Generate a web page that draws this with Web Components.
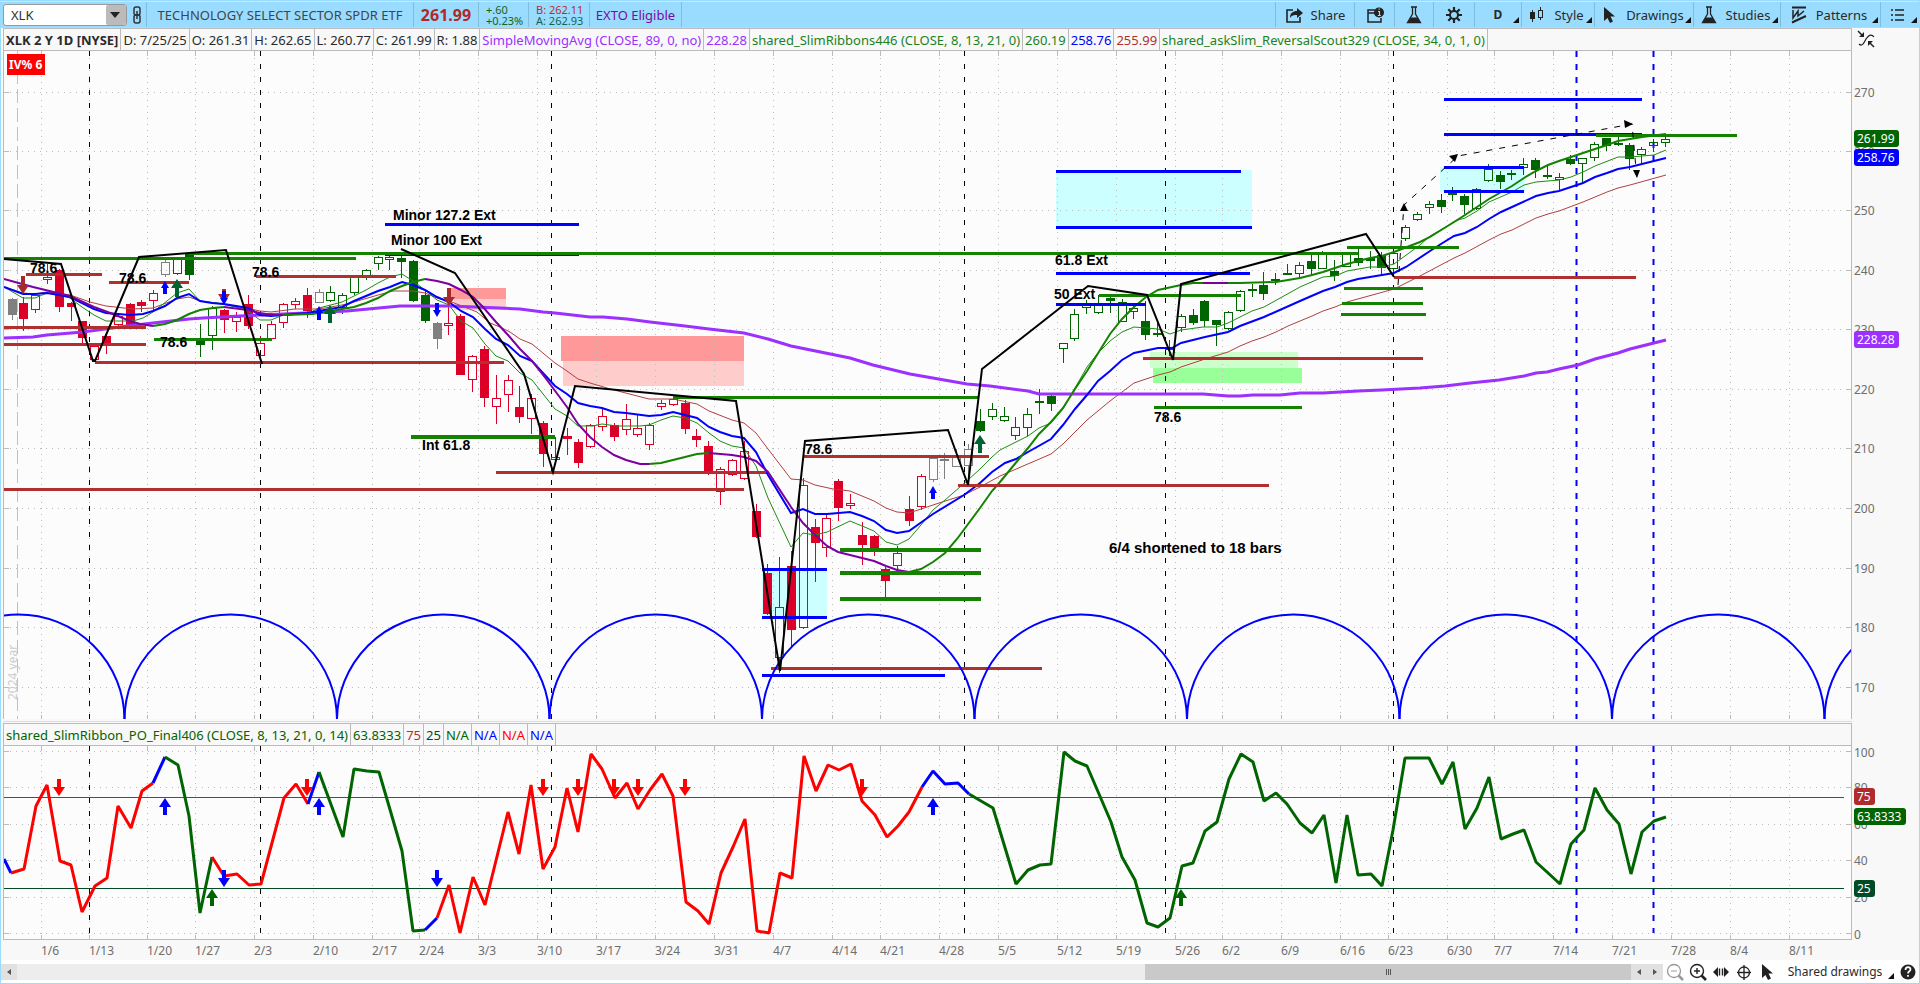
<!DOCTYPE html>
<html lang="en">
<head>
<meta charset="utf-8">
<title>XLK 2 Y 1D</title>
<style>
  html { background: #f8f8f8; }
  body { margin: 0; font-family: "Noto Sans", "Open Sans", sans-serif; font-size: 12px; color: #2a2a2a; }
</style>
</head>
<body>
<chart-window></chart-window>

<script>
const define = (name, html, setup) => customElements.define(name, class extends HTMLElement {
  connectedCallback() {
    if (this.shadowRoot) return;
    const root = this.attachShadow({ mode: "open" });
    const t = document.createElement("template");
    t.innerHTML = typeof html === "function" ? html(this) : html;
    root.append(t.content.cloneNode(true));
    if (setup) setup(this, root);
  }
});

/* ---------- icons ---------- */
const ICONS = {
  share: '<path d="M8 4H2v12h13v-5" fill="none" stroke="#222" stroke-width="1.6"/><path d="M5 12c0-5 3-7 7-7V2l6 5-6 5V9c-3 0-5 0-7 3z" fill="#222"/>',
  info: '<path d="M9 4H2v12h13v-4M2 7h8" fill="none" stroke="#222" stroke-width="1.5"/><circle cx="13" cy="6.500" r="5" fill="#222"/><path d="M12 5.500h1.500V9M11.800 9.500h3M12.600 3.200h1.200" stroke="#9adcff" stroke-width="1.200" fill="none"/>',
  flask: '<path d="M6 1h6M7.500 1v7L2.500 16.500h13L10.500 8V1" fill="none" stroke="#222" stroke-width="1.3"/><path d="M5.600 11.500h6.800l3 5.500H2.600z" fill="#222"/>',
  gear: '<g stroke="#222" stroke-width="2.200"><path d="M9 1v4M9 13v4M1 9h4M13 9h4M3.300 3.300l3 3M11.700 11.700l3 3M3.300 14.700l3-3M11.700 6.300l3-3"/></g><circle cx="9" cy="9" r="4" fill="none" stroke="#222" stroke-width="2"/>',
  candles: '<path d="M4.500 4v12M12.500 1v13" stroke="#222" stroke-width="1"/><rect x="2" y="6" width="5" height="7" fill="#222"/><rect x="10.500" y="4.500" width="4" height="7" fill="#9adcff" stroke="#222"/>',
  cursor: '<path d="M4 1v14l3.500-3 2.500 5 3-1.500-2.500-5H15z" fill="#222"/>',
  patterns: '<path d="M2 1.500h14M2 16.500L16 10" stroke="#222" stroke-width="2"/><path d="M3 4v8l5-7v5l6-5" fill="none" stroke="#222" stroke-width="1.500"/>',
  list: '<path d="M2 4h2M6 4h9M2 9h2M6 9h9M2 14h2M6 14h9" stroke="#222" stroke-width="1.600"/>',
  link: '<rect x="6" y="1" width="6" height="8" rx="2" fill="none" stroke="#333" stroke-width="1.500"/><rect x="6" y="9" width="6" height="8" rx="2" fill="none" stroke="#333" stroke-width="1.500"/><path d="M9 5v8" stroke="#333" stroke-width="1.500"/>',
  zoomOut: '<circle cx="8" cy="8" r="6.500" fill="none" stroke="#999" stroke-width="1.300"/><path d="M5 8h6" stroke="#999"/><path d="M12.500 12.500L17 17" stroke="#999" stroke-width="2.500"/>',
  zoomIn: '<circle cx="8" cy="8" r="6.500" fill="none" stroke="#222" stroke-width="1.400"/><path d="M5 8h6M8 5v6" stroke="#222" stroke-width="1.400"/><path d="M12.500 12.500L17 17" stroke="#222" stroke-width="2.600"/>',
  spread: '<path d="M1 9l5-5v10zM17 9l-5-5v10z" fill="#222"/><path d="M7.500 5.500v7M10.500 5.500v7" stroke="#222" stroke-width="1.400"/>',
  cross: '<circle cx="9" cy="9.500" r="5.500" fill="none" stroke="#222" stroke-width="1.300"/><path d="M9 2v15M2 9.500h14" stroke="#222" stroke-width="1.300"/>',
  collapse: '<path d="M1 1l5 5" stroke="#222" stroke-width="1.500"/><path d="M7 2v5H2z" fill="#222"/><path d="M2 14c3 3 5-1 7-5 2-3 5-6 8-2" fill="none" stroke="#222" stroke-width="1.200"/><path d="M17 17l-5-5" stroke="#222" stroke-width="1.500"/><path d="M11 16v-5h5z" fill="#222"/>',
  help: '<circle cx="9" cy="9" r="7.500" fill="#222"/><path d="M6.500 7c0-4 5-3.500 5-.5 0 2-2.500 1.500-2.500 4M9 12v1.800" fill="none" stroke="#fff" stroke-width="1.700"/>'
};

/* icon-glyph: one 18px line icon picked by name */
define("icon-glyph", el => `<style>:host{display:block;width:18px;height:18px;flex:none}svg{display:block}</style>
  <svg width="18" height="18" viewBox="0 0 18 18">${ICONS[el.getAttribute("name")]}</svg>`);

/* tool-button: icon, label and an optional menu corner */
define("tool-button", el => `<style>
  :host{display:block;height:100%;box-sizing:border-box;width:var(--w,auto);font-size:13px}
  button{all:unset;box-sizing:border-box;position:relative;display:flex;align-items:center;justify-content:center;gap:8px;width:100%;height:100%;font-size:inherit;white-space:nowrap;color:#2a2a2a}
  :host([menu]) button{padding-right:4px}
  :host([menu]) button::after{content:"";position:absolute;right:2px;bottom:4px;border:3px solid transparent;border-right-color:#111;border-bottom-color:#111}
  :host([strong]) button{font-weight:bold;padding-right:0;font-size:12px}
  </style><button type="button" aria-label="${el.getAttribute("label") || el.textContent.trim()}">${el.hasAttribute("icon") ? `<icon-glyph name="${el.getAttribute("icon")}"></icon-glyph>` : ""}<slot></slot></button>`);

define("main-toolbar", `<style>
  :host{display:flex;align-items:stretch;height:27px;box-sizing:border-box;background:#9adcff;border-top:1px solid #c4e9fb;border-bottom:1px solid #b0dcf0;padding-left:3px;margin-left:-1px}
  .combo{position:relative;width:124px;align-self:center;height:22px}
  select{appearance:none;box-sizing:border-box;width:100%;height:22px;border:1px solid #999;border-radius:3px;background:#fff;font:13px "Noto Sans",sans-serif;color:#333;padding:0 0 0 7px;display:block}
  .combo::after{content:"";position:absolute;right:1px;top:1px;width:20px;height:20px;border-radius:2px;background:#bbb}
  .combo::before{content:"";position:absolute;z-index:1;right:7px;top:8px;border:5px solid transparent;border-top:6px solid #222;border-bottom:0}
  .cell{display:flex;align-items:center;border-left:1px solid #80bcdc;white-space:nowrap}
  .name{font-size:13px;width:266px;justify-content:center;color:#444}
  .last{font-size:16px;font-weight:bold;color:#b02828;width:64px;justify-content:center}
  .two{flex-direction:column;align-items:flex-start;justify-content:center;font-size:11px;line-height:11px;box-sizing:border-box}
  .chg{color:#146414;width:50px;padding-left:7px} .ba{width:61px;padding-left:7px;color:#14644a} .ba b{font-weight:normal;color:#b03030}
  .exto{color:#7a0aa0;font-size:13px;width:91px;justify-content:center}
  .fill{flex:1}
  tool-button{border-left:1px solid #80bcdc}
  tool-button.link{--w:19px;border:0}
</style>
<label class="combo"><select aria-label="Symbol"><option>XLK</option></select></label>
<tool-button class="link" icon="link" label="Link symbol"></tool-button>
<div class="cell name">TECHNOLOGY SELECT SECTOR SPDR ETF</div>
<div class="cell last">261.99</div>
<div class="cell two chg"><span>+.60</span><span>+0.23%</span></div>
<div class="cell two ba"><b>B: 262.11</b><span>A: 262.93</span></div>
<div class="cell exto">EXTO Eligible</div>
<div class="cell fill"></div>
<tool-button icon="share" style="--w:79px">Share</tool-button>
<tool-button icon="info" style="--w:40px" label="Info"></tool-button>
<tool-button icon="flask" style="--w:39px" label="Lab"></tool-button>
<tool-button icon="gear" style="--w:41px" label="Settings"></tool-button>
<tool-button menu strong style="--w:47px">D</tool-button>
<tool-button menu icon="candles" style="--w:73px">Style</tool-button>
<tool-button menu icon="cursor" style="--w:99px">Drawings</tool-button>
<tool-button menu icon="flask" style="--w:87px">Studies</tool-button>
<tool-button menu icon="patterns" style="--w:100px">Patterns</tool-button>
<tool-button menu icon="list" style="--w:39px" label="Panels"></tool-button>`);

/* study-bar: the row of values above a pane; cells are slotted */
define("study-bar", `<style>
  :host{display:flex;height:23px;box-sizing:border-box;border:1px solid #bbb;background:#f8f8f8;overflow:hidden}
  ::slotted(span){display:flex;align-items:center;padding:0 2px;border-right:1px solid #bbb;white-space:nowrap;font-size:13px;line-height:18px}
</style><slot></slot>`);

/* ---------- drawing helpers ---------- */
const DATES = [["1/6",41],["1/13",89],["1/20",147],["1/27",195],["2/3",254],["2/10",313],["2/17",372],["2/24",419],["3/3",478],["3/10",537],["3/17",596],["3/24",655],["3/31",714],["4/7",773],["4/14",832],["4/21",880],["4/28",939],["5/5",998],["5/12",1057],["5/19",1116],["5/26",1175],["6/2",1222],["6/9",1281],["6/16",1340],["6/23",1388],["6/30",1447],["7/7",1494],["7/14",1553],["7/21",1612],["7/28",1671],["8/4",1730],["8/11",1789]];
const seg = (x1, y1, x2, y2, c, w = 1, dash = "") => `<path d="M${x1} ${y1}L${x2} ${y2}" stroke="${c}" stroke-width="${w}" fill="none"${dash ? ` stroke-dasharray="${dash}"` : ""}/>`;
const poly = (pts, c, w, extra = "") => `<polyline points="${pts}" fill="none" stroke="${c}" stroke-width="${w}" ${extra}/>`;
const rect = (x1, y1, x2, y2, c) => `<rect x="${x1}" y="${y1}" width="${x2 - x1}" height="${y2 - y1}" fill="${c}"/>`;
const up = (x, y, c, h = 18, r = 6) => `<path fill="${c}" d="M${x} ${y}l${r} ${r + 3}h-${r - 2}v${h - r - 3}h-4v-${h - r - 3}h-${r - 2}z"/>`;
const down = (x, y, c, h = 18, r = 6) => `<path fill="${c}" d="M${x} ${y}l${r} -${r + 3}h-${r - 2}v-${h - r - 3}h-4v${h - r - 3}h-${r - 2}z"/>`;
const grid = (top, bottom, ys) => {
  let s = "";
  for (const [, x] of DATES) s += seg(x + .5, top + 1, x + .5, bottom, "#bcbcbc", 1, "1 5") + seg(x + .5, top, x + .5, top + 5, "#bbb") + seg(x + .5, bottom - 4, x + .5, bottom, "#bbb");
  for (const y of ys) s += seg(4, y + .5, 1851, y + .5, "#bcbcbc", 1, "1 5") + seg(4, y + .5, 9, y + .5, "#bbb") + seg(1846, y + .5, 1851, y + .5, "#bbb");
  return s;
};
const verticals = (top, bottom) => [89, 260, 551, 964, 1165, 1393].map(x => seg(x + .5, top, x + .5, bottom, "#000", 1, "5 8")).join("")
  + [1576, 1653].map(x => seg(x + .5, top, x + .5, bottom, "#00f", 2, "6 7")).join("");

/* ---------- price pane data: type, wick top, wick bottom, body top, body bottom ----------
   r/g/y filled red, green, grey; R/G/Y hollow */
const CANDLES = `y 298 320 299 315,r 297 331 303 319,R 294 313 295 310,R 264 284 277 280,r 269 312 270 307,r 302 321 303 307,r 321 344 321 338,R 345 362 346 360,r 335 354 336 344,R 314 328 316 325,r 303 326 304 325,r 300 312 302 306,R 290 310 293 301,Y 260 277 262 275,G 257 275 259 274,g 254 280 254 275,g 324 357 340 345,G 306 350 308 336,r 309 333 310 320,R 312 332 317 322,r 295 329 304 326,R 336 359 343 356,R 321 339 324 339,R 303 328 304 323,R 298 309 301 305,r 288 318 295 311,Y 289 303 292 303,G 286 302 292 301,G 293 314 295 308,G 276 295 277 293,G 269 280 270 276,G 256 270 257 264,G 252 270 257 260,g 255 278 258 262,g 260 302 261 301,g 290 323 295 321,y 322 349 323 339,R 307 335 323 326,r 314 375 316 375,R 355 392 356 380,r 346 407 349 398,R 375 424 398 407,R 375 412 380 395,r 386 423 407 417,R 394 434 398 419,r 421 467 423 454,R 437 459 457 459,r 428 455 436 439,r 439 468 442 463,R 424 448 425 447,R 408 431 416 427,r 423 441 425 437,R 404 435 419 430,R 415 437 428 435,R 423 450 425 445,R 400 410 403 407,R 398 406 399 405,r 400 434 403 429,r 429 447 436 440,r 441 475 446 472,R 467 505 469 492,R 459 476 460 475,R 441 480 451 479,r 504 538 511 537,r 564 615 573 614,R 557 673 607 658,r 551 648 566 630,R 478 629 485 628,r 519 582 527 543,R 513 557 518 548,r 479 521 481 508,R 494 509 503 506,r 522 565 535 545,r 535 556 536 550,r 567 597 569 581,R 546 570 553 566,r 496 526 509 521,R 474 510 476 507,Y 458 482 458 480,y 453 479 459 461,Y 449 467 455 467,Y 444 477 449 466,g 409 432 421 431,G 403 420 409 417,G 407 422 416 421,G 417 440 427 436,G 408 436 414 428,g 389 414 401 403,g 395 411 396 404,G 343 363 343 349,G 309 341 314 339,G 300 314 305 308,G 295 314 303 313,g 297 313 298 301,G 299 322 302 322,G 306 319 308 312,g 301 340 321 335,g 321 337 333 335,g 340 356 348 349,G 314 332 316 328,g 309 325 315 323,g 300 327 301 321,g 320 346 320 325,G 311 330 312 329,G 290 312 291 311,g 284 297 289 291,g 272 300 285 294,g 273 285 279 281,g 264 275 273 275,G 262 278 265 274,g 255 275 261 269,G 251 269 254 269,g 260 281 271 276,G 253 267 254 267,g 248 266 258 263,g 251 269 258 261,g 252 274 255 268,G 251 272 253 269,G 225 241 227 239,G 212 221 214 220,G 201 214 204 208,g 194 213 200 207,g 187 201 193 194,g 194 214 196 205,G 188 210 189 209,G 164 182 169 181,g 171 189 175 182,g 170 180 173 175,G 158 175 164 168,g 158 178 160 170,g 165 179 175 177,G 173 191 177 180,g 155 165 159 164,G 158 183 158 164,G 142 161 144 158,g 138 151 138 146,g 137 146 143 145,g 143 170 145 159,G 147 164 149 155,G 139 152 142 146,G 136 147 139 143`;
const candleMarks = () => CANDLES.split(",").map((row, k) => {
  const [type, wt, wb, bt, bb] = row.split(" ").map((v, i) => i ? +v : v);
  const x = Math.floor(12 + 11.81 * k);
  const c = { r: "#dc0028", g: "#006400", y: "#808080" }[type.toLowerCase()];
  const h = Math.max(bb - bt, 2);
  let s = `<path d="M${x + .5} ${wt}V${bt}M${x + .5} ${bt + h}V${wb}" stroke="${c}"/>`;
  return s + (type === type.toLowerCase()
    ? rect(x - 4, bt, x + 5, bt + h, c)
    : `<rect x="${x - 3.5}" y="${bt + .5}" width="8" height="${Math.max(h - 1, 2)}" fill="none" stroke="${c}"/>`);
}).join("");

const MA89 = "4,338 33,337 47,335 83,332 127,326 153,323 189,319 203,318 240,316 283,314 347,311 400,306 450,306 500,308 520,309 543,312 555,313 590,317 603,317 627,319 650,322 685,326 709,329 744,333 768,339 791,346 850,358 873,365 910,374 967,384 990,386 1028,391 1039,394 1203,394 1228,396 1240,396 1253,395 1280,395 1300,393 1323,393 1358,391 1382,390 1420,388 1445,386 1470,383 1499,380 1524,376 1536,373 1547,372 1559,369 1578,365 1595,359 1618,353 1630,349 1666,340";
const EMA13 = "4,287 23,294 35,294 47,293 59,295 70,297 94,309 106,313 130,315 143,314 153,311 165,306 177,298 189,294 200,301 212,303 224,304 236,306 248,308 260,315 271,316 283,315 307,313 319,311 330,309 342,307 354,301 366,296 378,291 390,287 402,282 413,285 425,290 437,297 449,302 461,311 473,317 485,329 496,339 508,345 520,356 532,361 555,386 567,394 578,403 590,406 602,408 614,412 626,413 649,416 661,415 673,412 697,418 709,427 720,432 732,436 744,438 756,452 768,475 791,513 803,509 815,514 827,514 850,512 862,516 874,521 886,530 897,533 909,531 933,514 964,495 980,483 992,472 1005,463 1016,459 1028,452 1051,439 1063,425 1075,409 1087,395 1098,381 1110,371 1122,360 1134,353 1158,348 1172,348 1181,343 1205,337 1228,332 1240,326 1264,317 1300,301 1323,291 1335,287 1347,282 1358,279 1382,275 1394,273 1406,267 1430,251 1441,244 1454,236 1465,233 1477,227 1489,219 1501,212 1512,207 1536,196 1548,193 1559,191 1583,183 1595,177 1607,173 1618,169 1630,167 1666,158";
const EMA8 = "4,287 23,298 35,298 47,293 59,295 70,298 82,307 94,315 106,321 133,321 143,318 153,312 177,293 189,289 200,301 217,303 236,307 248,311 260,320 271,320 283,315 307,314 319,308 342,302 354,296 366,290 378,283 390,277 402,274 413,281 425,290 437,300 449,305 461,321 473,328 485,344 496,356 508,361 520,373 532,380 555,409 567,416 578,426 593,426 602,424 617,426 640,426 649,425 661,420 673,416 685,418 697,423 709,433 720,441 732,446 744,448 756,466 768,498 791,547 803,533 815,535 827,532 850,521 862,526 874,531 886,542 897,545 909,539 921,525 933,510 945,500 968,480 980,469 992,457 1000,450 1016,442 1028,436 1039,428 1051,423 1063,409 1087,367 1098,353 1110,341 1122,332 1134,327 1158,329 1170,334 1181,330 1203,327 1217,327 1228,323 1240,317 1252,311 1264,307 1300,287 1323,277 1335,276 1347,271 1370,267 1382,267 1394,264 1420,245 1430,236 1458,220 1465,218 1477,211 1489,202 1512,192 1524,185 1536,182 1559,180 1571,177 1583,172 1595,166 1618,157 1630,157 1654,155 1666,150";
const EMA21 = "4,287 23,293 35,294 47,292 70,295 90,302 106,306 133,309 153,308 177,299 189,297 200,301 236,306 260,311 271,312 295,309 319,309 342,305 354,302 378,295 393,291 413,291 425,293 437,298 449,301 467,308 477,312 490,323 500,327 510,332 520,339 532,344 555,363 567,371 578,379 590,383 614,390 649,399 673,399 697,404 709,411 732,420 744,423 756,433 768,449 791,479 803,480 815,485 833,489 850,491 874,501 886,508 897,512 909,513 921,509 933,505 964,495 980,487 1000,476 1051,454 1063,444 1087,420 1110,401 1134,383 1158,375 1170,372 1181,367 1205,359 1228,352 1240,346 1252,341 1264,337 1276,332 1288,326 1312,316 1323,311 1335,307 1347,302 1394,289 1420,276 1454,258 1465,253 1489,240 1501,234 1512,230 1524,224 1536,218 1548,214 1559,211 1583,202 1607,192 1618,188 1630,185 1666,175";
const V = "#7a00a0", G = "#148200";
const RIBBON = [
  [V, "4,279 33,287 70,296 94,307 113,314 130,321 140,324 153,326"], [G, "153,326 165,324 177,320 189,314 200,310 213,308 224,307"],
  [V, "224,307 248,310 260,313 273,315 283,315"], [G, "283,315 313,314 330,311 354,307 366,303 378,298 390,291 402,286 413,282 425,279"],
  [V, "425,279 437,281 449,284 461,290 473,297 483,307 496,322 508,335 520,349 532,361 547,380 567,407 578,424 590,437 602,447 614,455 626,460 640,464 649,464"],
  [G, "649,464 661,463 673,460 697,454 709,453"], [V, "709,453 732,455 744,457 756,461 768,472 791,507 803,523 815,535 827,546 838,552 850,555 874,561 886,566 897,570 909,572"],
  [G, "909,572 921,569 933,562 945,553 957,539 980,508 992,491 1000,482 1028,448 1039,434 1051,422 1063,408 1075,389 1087,371 1110,334 1122,319 1134,307 1146,297 1158,290 1181,285 1193,283 1203,283"],
  [V, "1203,283 1228,283"], [G, "1228,283 1240,283 1276,282 1288,280 1300,278 1312,275 1323,272 1335,268 1347,264 1370,258 1382,256 1394,252 1420,242 1430,237 1454,222 1465,215 1489,199 1512,186 1524,178 1536,171 1548,165 1559,161 1583,153 1607,145 1618,141 1630,139 1642,137 1666,134"]
];
const LEVELS = {
  "#00f": [[385,579,224],[385,579,254],[762,827,569],[762,827,617],[762,945,675],[1056,1241,171],[1056,1252,227],[1056,1250,273],[1056,1146,304],[1444,1642,99],[1444,1642,134],[1444,1524,167],[1444,1524,191]],
  "#b03030": [[26,102,274],[109,189,282],[4,146,327],[4,146,344],[256,396,276],[95,504,362],[4,744,489],[496,766,472],[803,989,456],[958,1269,485],[771,1042,668],[1143,1423,358],[1394,1636,277]],
  "#148200": [[4,356,258],[189,1358,253],[154,272,339],[673,979,397],[1099,1241,295],[1154,1302,407],[1347,1459,247],[1344,1423,288],[1342,1423,303],[1341,1426,314],[1596,1737,135]]
};
const NOTES = [["78.6",30,273],["78.6",119,283],["78.6",252,277],["78.6",160,347],["Minor 127.2 Ext",393,220],["Minor 100 Ext",391,245],["Int 61.8",422,450],["78.6",805,454],["61.8 Ext",1055,265],["50 Ext",1054,299],["78.6",1154,422]];

define("price-pane", () => {
  let s = "";
  s += rect(450,288,506,299,"#ff9999") + rect(454,299,506,310,"#ffcccc") + rect(561,336,744,361,"#ff9999") + rect(563,361,744,386,"#ffcccc")
    + rect(762,569,827,617,"#ccffff") + rect(1056,170,1252,228,"#ccffff") + rect(1440,167,1525,192,"#ccffff")
    + rect(1150,352,1298,368,"#ccffcc") + rect(1153,368,1302,383,"#99ff99");
  s += grid(51, 719, [92,151,210,270,329,389,448,508,568,627,687]);
  s += seg(17.5, 51, 17.5, 719, "#c0c0c0", 1, "14 5");
  s += verticals(51, 719);
  s += candleMarks();
  s += poly(EMA21, "#b04040", 1) + poly(EMA8, "#1e8c14", 1) + poly(MA89, "#9b30ff", 3) + poly(EMA13, "#00f", 2);
  for (const [c, p] of RIBBON) s += poly(p, c, 2);
  for (const c in LEVELS) for (const [a, b, y] of LEVELS[c]) s += seg(a, y + .5, b, y + .5, c, 3);
  for (const y of [550, 573, 599]) s += seg(840, y, 981, y, "#148200", 4);
  s += seg(411, 437, 555, 437, "#148200", 4);
  for (let i = -1; i < 9; i++) { const x = 124.5 + 212.5 * i; s += `<path d="M${x} 720A106.250 105.500 0 0 1 ${x + 212.5} 720" fill="none" stroke="#00f" stroke-width="2"/>`; }
  for (const p of ["4,259 61,264 93,361 95,361 139,257 226,250 262,364", "401,249 455,273 500,339 524,374 553,472 575,386 736,401 780,671 805,441 948,430 968,485 982,369 1000,355 1088,286 1147,295 1173,360 1181,284 1366,234 1394,277"]) s += poly(p, "#000", 2);
  s += poly("1398,285 1404,205 1458,156 1632,124 1637,180", "#000", 1, 'stroke-dasharray="6 7"');
  s += '<path d="M1404 203l4 8h-8zM1458 154l-3 8-6-6zM1633 124l-9-4 1 8zM1637 178l-4-8h7z" fill="#000"/>';
  s += down(23,294,"#a52a2a") + down(224,303,"#a52a2a",14) + down(449,306,"#a52a2a") + down(224,305,"#00f",14,4) + down(437,317,"#00f",14,4)
    + up(165,281,"#00f",13,4) + up(319,306,"#00f",14,4) + up(933,486,"#00f",13,4) + up(177,279,"#006432") + up(330,305,"#006432") + up(980,435,"#006432");
  for (const [t, x, y] of NOTES) s += `<text class="n" x="${x}" y="${y}">${t}</text>`;
  s += '<text class="n w" x="1109" y="553">6/4 shortened to 18 bars</text>';
  s += '<text class="yr" transform="translate(17 700) rotate(-90)">2024 year</text>';
  s += rect(7,54,45,75,"#f00") + '<text class="iv" x="9" y="69">IV% 6</text>';
  return `<style>:host{display:block;background:#fcfcfc;border:1px solid #bbb;border-width:0 1px}svg{display:block;width:100%}
    .n{font:bold 14px "Liberation Sans",Arial,sans-serif}.w{font-size:15px}.yr{font-size:12px;fill:#ccc}.iv{font-size:12px;font-weight:bold;fill:#fff}</style>
    <svg viewBox="4 51 1847 668" role="img" aria-label="XLK daily candles">${s}</svg>`;
});

/* ---------- oscillator pane ---------- */
const R = "#f00", B = "#00f", D = "#006400";
const OSC = [
  [B,"4,859 11,873"],[R,"11,873 24,869 36,806 47,785 60,861 71,865 82,912 95,886 107,878 118,806 131,828 142,791 153,783"],[B,"153,783 165,757"],
  [D,"165,757 178,765 189,816 200,913 212,857"],[R,"212,857 224,876 237,874 249,885 261,884 284,798 296,784 308,804"],[B,"308,804 319,772"],
  [D,"319,772 343,837 354,769 367,771 379,772 391,813 402,851 413,931 425,930"],[B,"425,930 437,918"],
  [R,"437,918 449,885 460,933 473,877 485,905 508,812 519,854 531,785 543,869 555,847 567,788 578,832 591,754 602,769 615,798 627,783 638,809 650,790 662,774 673,796 686,902 698,911 709,924 721,873 733,847 745,819 757,931 769,933 780,873 792,878 804,756 816,791 828,765 839,770 851,764 862,801 875,815 887,837 898,826 909,812 922,787"],
  [B,"922,787 933,771 945,784 958,783 969,794"],
  [D,"969,794 993,808 1016,884 1028,870 1040,865 1051,864 1064,752 1075,761 1087,766 1111,822 1122,857 1135,880 1147,923 1158,927 1170,918 1182,866 1193,863 1205,831 1217,822 1229,779 1241,754 1253,762 1264,801 1276,793 1287,804 1300,823 1312,833 1324,815 1336,883 1347,815 1358,875 1371,874 1382,886 1393,830 1405,758 1429,758 1442,784 1453,762 1465,829 1477,808 1489,777 1501,839 1513,834 1524,830 1536,862 1547,872 1560,884 1571,844 1584,830 1595,788 1607,810 1619,824 1631,874 1642,832 1654,821 1666,817"]
];
define("oscillator-pane", () => {
  let s = grid(746, 939, [751,787,824,860,897,933]) + seg(4,797.5,1844,797.5,"#a52a2a") + seg(4,888.5,1844,888.5,"#004b23") + verticals(746, 933);
  for (const [c, p] of OSC) s += poly(p, c, 3, 'stroke-linejoin="bevel"');
  for (const x of [59,307,543,578,614,638,685,862]) s += down(x, 796, R, 17);
  for (const x of [165,319,933]) s += up(x, 798, B, 17);
  for (const x of [224,437]) s += down(x, 887, B, 17);
  for (const x of [212,1181]) s += up(x, 889, D, 17);
  return `<style>:host{display:block;background:#fcfcfc;border:1px solid #bbb;border-width:0 1px 1px}svg{display:block;width:100%}</style>
    <svg viewBox="4 746 1847 193" role="img" aria-label="Slim ribbon oscillator">${s}</svg>`;
});

/* value scale beside a pane, with coloured tags over it */
const scale = (view, labels, tags) => `<style>:host{display:block}svg{display:block;width:100%;font-size:12px;overflow:visible}</style><svg viewBox="${view}">`
  + labels.map(([t, y]) => `<text x="1854" y="${y + 5}" fill="#6e6e6e">${t}</text>`).join("")
  + tags.map(([t, y, w, c]) => `<rect x="1854" y="${y}" width="${w}" height="17" rx="3" fill="${c}"/><text x="1857" y="${y + 13}" fill="#fff">${t}</text>`).join("") + "</svg>";
define("price-scale", scale("1852 51 67 668", [270,260,250,240,230,220,210,200,190,180,170].map((v, i) => [v, [92,151,210,270,329,389,448,508,568,627,687][i]]),
  [["261.99",130,45,"#006400"],["258.76",149,45,"#00f"],["228.28",331,45,"#9b30ff"]]));
define("oscillator-scale", scale("1852 746 67 193", [["100",752],["80",787],["60",824],["40",860],["20",897],["0",934]],
  [["75",788,21,"#b02c2c"],["63.8333",808,52,"#006400"],["25",880,21,"#004b23"]]));

define("date-scale", () => `<style>:host{display:block}svg{display:block;width:100%;font-size:12px}</style>
  <svg viewBox="3 940 1849 20">${DATES.map(([t, x]) => `<text x="${x}" y="955" fill="#6e6e6e">${t}</text>`).join("")}</svg>`);

define("bottom-bar", `<style>
  :host{display:flex;align-items:center;height:23px;background:#fff}
  .track{flex:1;display:flex;height:16px;background:#ededed}
  .step{all:unset;width:16px;height:16px;background:#e1e1e1;display:grid;place-items:center;flex:none}
  .step::after{content:"";border:3px solid transparent}
  .l::after{border-right:4px solid #555;border-left:0}.r::after{border-left:4px solid #555;border-right:0}
  .gap{flex:1128}.thumb{flex:486;background:#c9c9c9;display:flex;align-items:center;justify-content:center;gap:1px}
  .thumb i{width:1px;height:6px;background:#555}
  .icon,.help{--w:23px}
  tool-button.shared{--w:118px;font-size:12px}
</style>
<div class="track"><button class="step l" aria-label="Scroll left"></button><div class="gap"></div><div class="thumb"><i></i><i></i><i></i></div></div>
<button class="step l" aria-label="Step back"></button><button class="step r" aria-label="Step forward"></button>
<tool-button class="icon" icon="zoomOut" label="Zoom out"></tool-button><tool-button class="icon" icon="zoomIn" label="Zoom in"></tool-button>
<tool-button class="icon" icon="spread" label="Expand"></tool-button><tool-button class="icon" icon="cross" label="Crosshair"></tool-button>
<tool-button class="icon" icon="cursor" label="Pointer"></tool-button>
<tool-button class="shared" menu>Shared drawings</tool-button><tool-button class="help" icon="help" label="Help"></tool-button>`);

define("chart-window", `<style>
  :host{display:block;border:1px solid #9adcff;background:#f8f8f8}
  .panes{display:grid;grid-template-columns:minmax(0,1fr) 67px;padding-left:2px}
  .split{grid-column:1/-1;box-sizing:border-box;border-bottom:1px solid #ddd;margin:0 67px 1px 0;height:3px}
  .corner{padding:2px 0 0 5px}
  .v{color:#9b30ff}.g{color:#1c821c}.d{color:#006400}.b{color:#00f}.m{color:#b03030}.r{color:#f00}.t{color:#004b23}
</style>
<main-toolbar></main-toolbar>
<div class="panes">
  <study-bar>
    <span><b>XLK 2 Y 1D [NYSE]</b></span><span>D: 7/25/25</span><span>O: 261.31</span><span>H: 262.65</span><span>L: 260.77</span><span>C: 261.99</span><span>R: 1.88</span>
    <span class="v">SimpleMovingAvg (CLOSE, 89, 0, no)</span><span class="v">228.28</span><span class="g">shared_SlimRibbons446 (CLOSE, 8, 13, 21, 0)</span><span class="g">260.19</span><span class="b">258.76</span><span class="m">255.99</span><span class="g">shared_askSlim_ReversalScout329 (CLOSE, 34, 0, 1, 0)</span>
  </study-bar>
  <div class="corner"><icon-glyph name="collapse"></icon-glyph></div>
  <price-pane></price-pane><price-scale></price-scale>
  <div class="split"></div>
  <study-bar><span class="d">shared_SlimRibbon_PO_Final406 (CLOSE, 8, 13, 21, 0, 14)</span><span class="d">63.8333</span><span class="m">75</span><span class="t">25</span><span class="d">N/A</span><span class="b">N/A</span><span class="r">N/A</span><span class="b">N/A</span></study-bar>
  <div></div>
  <oscillator-pane></oscillator-pane><oscillator-scale></oscillator-scale>
  <date-scale></date-scale><div></div>
</div>
<bottom-bar></bottom-bar>`);
</script>
</body>
</html>
